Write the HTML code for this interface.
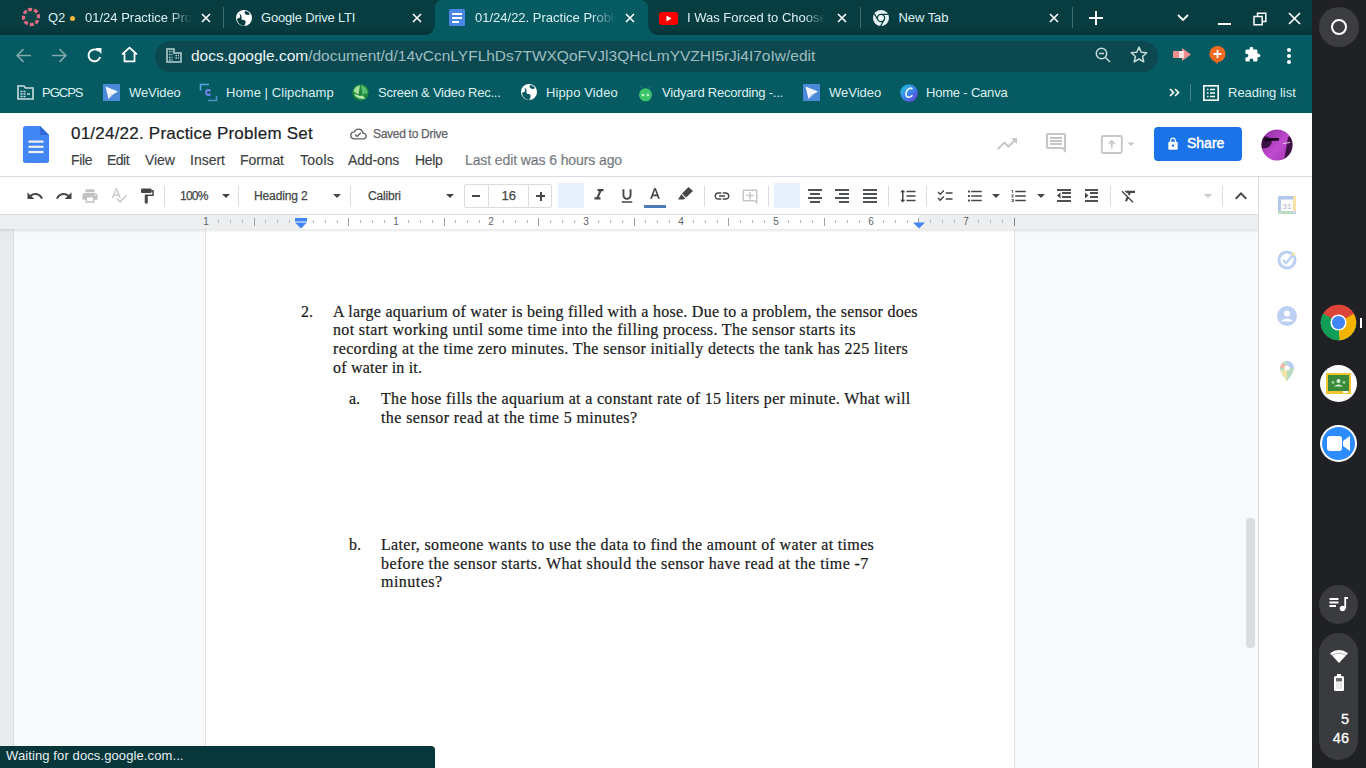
<!DOCTYPE html>
<html><head><meta charset="utf-8">
<style>
*{margin:0;padding:0;box-sizing:border-box}
html,body{width:1366px;height:768px;overflow:hidden;background:#fff;font-family:"Liberation Sans",sans-serif}
.a{position:absolute}
.nw{white-space:nowrap}
#tabs{left:0;top:0;width:1312px;height:35px;background:linear-gradient(#073c40 0,#073c40 29px,#043337 35px)}
#toolbar{left:0;top:35px;width:1312px;height:78px;background:#055b61}
#shelf{left:1312px;top:0;width:54px;height:768px;background:#202124}
#dochead{left:0;top:113px;width:1312px;height:63px;background:#fff}
#docbar{left:0;top:176px;width:1312px;height:39px;background:#fff;border-top:1px solid #dadce0}
#ruler{left:0;top:215px;width:1258px;height:14px;background:#eceef0}
#docarea{left:0;top:229px;width:1258px;height:539px;background:#f8f9fa}
#sidepanel{left:1258px;top:177px;width:54px;height:591px;background:#fff;border-left:1px solid #dadce0}
.tt{color:#dcf0f2;font-size:13px}
.bm{color:#dcf0f2;font-size:13px}
.menu{color:#3c4043;font-size:14px;-webkit-text-stroke:0.15px #3c4043}
.doc{font-family:"Liberation Serif",serif;color:#1a1a1a;font-size:16px;-webkit-text-stroke:0.2px #1a1a1a}
</style></head><body>
<div id="tabs" class="a"></div>
<div id="toolbar" class="a"></div>
<!-- tab strip -->
<svg class="a" style="left:423px;top:0" width="238" height="35" viewBox="0 0 238 35"><path d="M0 35 Q12 35 12 23 L12 8 Q12 0 20 0 L217 0 Q225 0 225 8 L225 23 Q225 35 237 35 Z" fill="#055b61"/></svg>
<svg class="a" style="left:21px;top:7px" width="20" height="20" viewBox="0 0 20 20"><circle cx="10" cy="10" r="6" fill="#0b4a40"/><circle cx="10" cy="10" r="2.5" fill="#0f3f5a"/><circle cx="10" cy="10" r="7.6" fill="none" stroke="#e56a86" stroke-width="3.2" stroke-dasharray="4 1.97" transform="rotate(-112 10 10)"/></svg>
<div class="a nw tt" style="left:48px;top:10px">Q2</div>
<div class="a" style="left:70px;top:15.5px;width:5px;height:5px;border-radius:2.5px;background:#f6b73c"></div>
<div class="a nw tt" style="left:85px;top:10px;width:107px;overflow:hidden;-webkit-mask-image:linear-gradient(90deg,#000 80%,transparent)">01/24 Practice Problem</div>
<svg class="a" style="left:201px;top:13px" width="10" height="10" viewBox="0 0 10 10"><path d="M1 1L9 9M9 1L1 9" stroke="#fff" stroke-width="1.6"/></svg>
<div class="a" style="left:223px;top:7px;width:1px;height:21px;background:#3f6a6e"></div>
<svg class="a" style="left:236px;top:10px" width="16" height="16" viewBox="0 0 16 16"><circle cx="8" cy="8" r="8" fill="#fff"/><path d="M3 3.5 Q6 5 5.5 7.5 Q5 10 7.5 10 Q10 10 9.5 13 Q9 15 8 16 Q5 15.5 3 13.5 Q1.5 12 1 9 Q2 8 3.5 8 Q5 6 3 3.5Z M9 1 Q8 3.5 10 4.5 Q12.5 5.5 14 4 Q12 1.2 9 1Z" fill="#063a3e"/></svg>
<div class="a nw tt" style="left:261px;top:10px;letter-spacing:-0.193px">Google Drive LTI</div>
<svg class="a" style="left:412px;top:13px" width="10" height="10" viewBox="0 0 10 10"><path d="M1 1L9 9M9 1L1 9" stroke="#fff" stroke-width="1.6"/></svg>
<svg class="a" style="left:449px;top:9px" width="16" height="17" viewBox="0 0 16 17"><rect x="0" y="0" width="16" height="17" rx="1.5" fill="#4a86e8"/><rect x="3" y="4" width="10" height="2" fill="#fff"/><rect x="3" y="8" width="10" height="2" fill="#fff"/><rect x="3" y="12" width="7" height="2" fill="#fff"/></svg>
<div class="a nw tt" style="left:475px;top:10px;width:141px;overflow:hidden;-webkit-mask-image:linear-gradient(90deg,#000 82%,transparent)">01/24/22. Practice Problem Set</div>
<svg class="a" style="left:625px;top:13px" width="10" height="10" viewBox="0 0 10 10"><path d="M1 1L9 9M9 1L1 9" stroke="#fff" stroke-width="1.6"/></svg>
<svg class="a" style="left:659px;top:12px" width="19" height="13" viewBox="0 0 19 13"><rect width="19" height="13" rx="3" fill="#ff0000"/><path d="M7.5 3.5L12.5 6.5L7.5 9.5Z" fill="#fff"/></svg>
<div class="a nw tt" style="left:687px;top:10px;width:138px;overflow:hidden;-webkit-mask-image:linear-gradient(90deg,#000 85%,transparent)">I Was Forced to Choose Between</div>
<svg class="a" style="left:837px;top:13px" width="10" height="10" viewBox="0 0 10 10"><path d="M1 1L9 9M9 1L1 9" stroke="#fff" stroke-width="1.6"/></svg>
<div class="a" style="left:860px;top:7px;width:1px;height:21px;background:#3f6a6e"></div>
<svg class="a" style="left:873px;top:10px" width="16" height="16" viewBox="0 0 16 16"><circle cx="8" cy="8" r="8" fill="#e6f4f5"/><circle cx="8" cy="8" r="3.6" fill="none" stroke="#063a3e" stroke-width="1.3"/><circle cx="8" cy="8" r="2.6" fill="#e6f4f5"/><path d="M8.00 4.40L15.14 4.40M11.12 9.80L7.55 15.99M4.88 9.80L1.31 3.61" stroke="#063a3e" stroke-width="1.2"/></svg>
<div class="a nw tt" style="left:898.5px;top:10px;letter-spacing:-0.057px">New Tab</div>
<svg class="a" style="left:1049px;top:13px" width="10" height="10" viewBox="0 0 10 10"><path d="M1 1L9 9M9 1L1 9" stroke="#fff" stroke-width="1.6"/></svg>
<div class="a" style="left:1072px;top:7px;width:1px;height:21px;background:#3f6a6e"></div>
<svg class="a" style="left:1089px;top:11px" width="14" height="14" viewBox="0 0 14 14"><path d="M7 0V14M0 7H14" stroke="#fff" stroke-width="2"/></svg>
<svg class="a" style="left:1177px;top:14px" width="12" height="8" viewBox="0 0 12 8"><path d="M1 1L6 6L11 1" fill="none" stroke="#fff" stroke-width="1.8"/></svg>
<div class="a" style="left:1218px;top:23px;width:13px;height:2px;background:#fff"></div>
<svg class="a" style="left:1253px;top:12px" width="14" height="14" viewBox="0 0 14 14"><path d="M4.5 4V1.2H12.8V9.5H10 M1 4.5H9.2V12.8H1Z" fill="none" stroke="#fff" stroke-width="1.5"/></svg>
<svg class="a" style="left:1288px;top:12px" width="13" height="13" viewBox="0 0 13 13"><path d="M1 1L12 12M12 1L1 12" stroke="#fff" stroke-width="1.7"/></svg>

<div id="shelf" class="a"></div>

<!-- toolbar -->
<svg class="a" style="left:15px;top:47px" width="17" height="17" viewBox="0 0 16 16"><path d="M15 8H2M8 2L2 8L8 14" fill="none" stroke="#7fa9ad" stroke-width="1.5"/></svg>
<svg class="a" style="left:51px;top:47px" width="17" height="17" viewBox="0 0 16 16"><path d="M1 8H14M8 2L14 8L8 14" fill="none" stroke="#7fa9ad" stroke-width="1.5"/></svg>
<svg class="a" style="left:86px;top:47px" width="17" height="17" viewBox="0 0 16 16"><path d="M13.3 9.5A5.6 5.6 0 1 1 11.8 3.8" fill="none" stroke="#fff" stroke-width="1.8"/><path d="M9 1H14.5V6.5Z" fill="#fff"/></svg>
<svg class="a" style="left:121px;top:46px" width="17" height="17" viewBox="0 0 16 16"><path d="M8 1.5L1.5 7.5H3.3V14.5H12.7V7.5H14.5Z" fill="none" stroke="#fff" stroke-width="1.7" stroke-linejoin="round"/></svg>
<div class="a" style="left:155px;top:40.5px;width:1003px;height:31px;border-radius:16px;background:#0b4850"></div>
<svg class="a" style="left:166px;top:48px" width="16" height="15" viewBox="0 0 16 15"><path d="M1 14V1H8V5H15V14Z" fill="none" stroke="#b9d0d2" stroke-width="1.5"/><path d="M3 3.5h1.5M5.5 3.5h1M3 6.5h1.5M5.5 6.5h1M3 9.5h1.5M5.5 9.5h1M3 12h1.5M5.5 12h1M9.5 7.5h1.5M12 7.5h1M9.5 10h1.5M12 10h1" stroke="#b9d0d2" stroke-width="1.4"/></svg>
<div class="a nw" style="left:191px;top:46.5px;font-size:15.5px;color:#9fbec1"><span style="color:#eef7f8">docs.google.com</span>/document/d/14vCcnLYFLhDs7TWXQoFVJl3QHcLmYVZHI5rJi4I7oIw/edit</div>
<svg class="a" style="left:1095px;top:47px" width="16" height="16" viewBox="0 0 16 16"><circle cx="6.5" cy="6.5" r="5.2" fill="none" stroke="#c7dbdd" stroke-width="1.5"/><path d="M4 6.5H9M10.2 10.2L15 15" stroke="#c7dbdd" stroke-width="1.5"/></svg>
<svg class="a" style="left:1130px;top:46px" width="18" height="17" viewBox="0 0 24 23"><path d="M12 1.5L15 8.5L22.5 9.2L16.8 14.2L18.5 21.5L12 17.6L5.5 21.5L7.2 14.2L1.5 9.2L9 8.5Z" fill="none" stroke="#c7dbdd" stroke-width="2" stroke-linejoin="round"/></svg>
<svg class="a" style="left:1173px;top:48px" width="18" height="13" viewBox="0 0 18 13"><path d="M0 3H9L9 0L18 6.5L9 13V10H0Z" fill="#f08f8f"/><rect x="6" y="3" width="5" height="7" fill="#fde0e0"/></svg>
<svg class="a" style="left:1209px;top:46px" width="17" height="18" viewBox="0 0 17 18"><circle cx="8.5" cy="8" r="8" fill="#f36b21"/><path d="M5 14L8 18L10 15Z" fill="#f36b21"/><path d="M8.5 4V12M4.5 8H12.5" stroke="#fff" stroke-width="1.8"/></svg>
<svg class="a" style="left:1244px;top:46px" width="17" height="17" viewBox="0 0 24 24"><path d="M20.5 11H19V7c0-1.1-.9-2-2-2h-4V3.5C13 2.12 11.88 1 10.5 1S8 2.12 8 3.5V5H4c-1.1 0-1.99.9-1.99 2v3.8H3.5c1.49 0 2.7 1.21 2.7 2.7s-1.21 2.7-2.7 2.7H2V20c0 1.1.9 2 2 2h3.8v-1.5c0-1.49 1.21-2.7 2.7-2.7 1.49 0 2.7 1.21 2.7 2.7V22H17c1.1 0 2-.9 2-2v-4h1.5c1.38 0 2.5-1.12 2.5-2.5S21.88 11 20.5 11z" fill="#fff"/></svg>
<div class="a" style="left:1287px;top:48px;width:4px;height:4px;border-radius:2px;background:#fff"></div>
<div class="a" style="left:1287px;top:54px;width:4px;height:4px;border-radius:2px;background:#fff"></div>
<div class="a" style="left:1287px;top:60px;width:4px;height:4px;border-radius:2px;background:#fff"></div>
<!-- bookmarks -->
<svg class="a" style="left:17px;top:85px" width="17" height="15" viewBox="0 0 17 15"><path d="M1 1H7L8.5 3H16V14H1Z" fill="none" stroke="#c9dcde" stroke-width="1.6"/><path d="M3.5 6.5h2M6.5 6.5h2M3.5 9h2M6.5 9h2M3.5 11.5h2M6.5 11.5h2M10 9h3" stroke="#c9dcde" stroke-width="1.3"/></svg>
<div class="a nw bm" style="left:42px;top:85px;letter-spacing:-1.004px">PGCPS</div>
<svg class="a" style="left:103px;top:84px" width="17" height="17" viewBox="0 0 17 17"><rect width="17" height="17" fill="#4a8ad8"/><path d="M2.5 2.5L15 7.5L10 10.5L5.5 15Z" fill="#f4f8fd"/><path d="M10 10.5L5.5 15L8 9.5Z" fill="#c2d6ef"/></svg>
<div class="a nw bm" style="left:129px;top:85px;letter-spacing:-0.080px">WeVideo</div>
<svg class="a" style="left:199px;top:83px" width="19" height="19" viewBox="0 0 19 19"><path d="M1.5 7.5V1.5H10" fill="none" stroke="#5aa8e8" stroke-width="1.6"/><path d="M9 17.5H17.5V13" fill="none" stroke="#4f8fc8" stroke-width="1.6"/><path d="M11.5 8Q10.5 7 9.5 7Q7 7 7 9.5Q7 12 9.5 12Q10.5 12 11.5 11" fill="none" stroke="#7a86f0" stroke-width="1.8"/></svg>
<div class="a nw bm" style="left:226px;top:85px;letter-spacing:0.066px">Home | Clipchamp</div>
<svg class="a" style="left:352px;top:84px" width="17" height="17" viewBox="0 0 17 17"><circle cx="8.5" cy="8.5" r="8.2" fill="#1e8a3e"/><path d="M8 1.2 Q3 2 1.5 7.5 L6.5 10.5Z" fill="#a8e09a"/><path d="M9 1.2 Q14.5 2.5 15.8 9 L10.5 10.5Z" fill="#5cbf70"/><path d="M2 10 Q5 16 13.5 14.5 L10.5 11.5 Q7 12.5 6 11Z" fill="#b9e8b0"/></svg>
<div class="a nw bm" style="left:378px;top:85px;letter-spacing:-0.244px">Screen &amp; Video Rec...</div>
<svg class="a" style="left:521px;top:84px" width="16" height="16" viewBox="0 0 16 16"><circle cx="8" cy="8" r="8" fill="#fff"/><path d="M3 3.5 Q6 5 5.5 7.5 Q5 10 7.5 10 Q10 10 9.5 13 Q9 15 8 16 Q5 15.5 3 13.5 Q1.5 12 1 9 Q2 8 3.5 8 Q5 6 3 3.5Z M9 1 Q8 3.5 10 4.5 Q12.5 5.5 14 4 Q12 1.2 9 1Z" fill="#055b61"/></svg>
<div class="a nw bm" style="left:546px;top:85px;letter-spacing:0.121px">Hippo Video</div>
<svg class="a" style="left:637px;top:84px" width="17" height="18" viewBox="0 0 17 18"><circle cx="8.5" cy="10.8" r="6.5" fill="#3cc46a"/><path d="M5 4.5L4 2M12 4.5L13 2" stroke="#3a7a8a" stroke-width="1"/><circle cx="6" cy="11" r="1.3" fill="#c8f5d0"/><circle cx="11" cy="11" r="1.3" fill="#c8f5d0"/></svg>
<div class="a nw bm" style="left:662px;top:85px;letter-spacing:-0.205px">Vidyard Recording -...</div>
<svg class="a" style="left:803px;top:84px" width="17" height="17" viewBox="0 0 17 17"><rect width="17" height="17" fill="#4a8ad8"/><path d="M2.5 2.5L15 7.5L10 10.5L5.5 15Z" fill="#f4f8fd"/><path d="M10 10.5L5.5 15L8 9.5Z" fill="#c2d6ef"/></svg>
<div class="a nw bm" style="left:829px;top:85px">WeVideo</div>
<svg class="a" style="left:900px;top:84px" width="18" height="18" viewBox="0 0 18 18"><defs><linearGradient id="cg" x1="0" y1="0" x2="1" y2="1"><stop offset="0" stop-color="#1ec8d8"/><stop offset="0.55" stop-color="#3a7ee8"/><stop offset="1" stop-color="#7a3ae0"/></linearGradient></defs><circle cx="9" cy="9" r="8.7" fill="url(#cg)"/><path d="M12.3 5.3Q11.5 3.8 10 4.3Q6 5.8 6 10.5Q6.2 13.5 9 13.2Q11 13 12.5 11.2" fill="none" stroke="#f2f8ff" stroke-width="1.6"/></svg>
<div class="a nw bm" style="left:926px;top:85px;letter-spacing:-0.192px">Home - Canva</div>
<svg class="a" style="left:1169px;top:88px" width="11" height="9" viewBox="0 0 11 9"><path d="M1 1L4.5 4.5L1 8M6 1L9.5 4.5L6 8" fill="none" stroke="#fff" stroke-width="1.7"/></svg>
<div class="a" style="left:1190px;top:84px;width:1px;height:17px;background:#4b8084"></div>
<svg class="a" style="left:1203px;top:85px" width="16" height="16" viewBox="0 0 16 16"><rect x="0.8" y="0.8" width="14.4" height="14.4" fill="none" stroke="#fff" stroke-width="1.6"/><path d="M4 4.5h1.5M7 4.5h5M4 8h1.5M7 8h5M4 11.5h1.5M7 11.5h5" stroke="#fff" stroke-width="1.6"/></svg>
<div class="a nw bm" style="left:1228px;top:85px;letter-spacing:-0.013px">Reading list</div>
<!-- shelf -->
<div class="a" style="left:1319px;top:7px;width:40px;height:40px;border-radius:20px;background:#3c3d40"></div>
<div class="a" style="left:1331px;top:19px;width:16px;height:16px;border-radius:8px;border:2px solid #fff"></div>
<div id="dochead" class="a"></div>
<div id="docbar" class="a"></div>

<!-- docs header -->
<svg class="a" style="left:23px;top:126px" width="26" height="37" viewBox="0 0 26 37"><path d="M2.5 0H17L26 9V34.5A2.5 2.5 0 0 1 23.5 37H2.5A2.5 2.5 0 0 1 0 34.5V2.5A2.5 2.5 0 0 1 2.5 0Z" fill="#4285f4"/><path d="M17 0L26 9H17Z" fill="#3367d6"/><rect x="5.5" y="14.5" width="15" height="2.2" fill="#f1f1f1"/><rect x="5.5" y="19.7" width="15" height="2.2" fill="#f1f1f1"/><rect x="5.5" y="24.9" width="15" height="2.2" fill="#f1f1f1"/></svg>
<div class="a nw" style="left:71px;top:124px;font-size:17px;color:#202124;letter-spacing:0.22px;-webkit-text-stroke:0.2px #202124">01/24/22. Practice Problem Set</div>
<svg class="a" style="left:350px;top:127px" width="17" height="14" viewBox="0 0 24 20"><path d="M19.35 8.04A7.49 7.49 0 0 0 12 2C9.11 2 6.6 3.64 5.35 6.04A5.994 5.994 0 0 0 0 12c0 3.31 2.69 6 6 6h13c2.76 0 5-2.24 5-5 0-2.64-2.05-4.78-4.65-4.96zM19 16H6c-2.21 0-4-1.79-4-4 0-2.05 1.53-3.76 3.56-3.97l1.07-.11.5-.95A5.469 5.469 0 0 1 12 4c2.62 0 4.88 1.86 5.39 4.43l.3 1.5 1.53.11A2.98 2.98 0 0 1 22 13c0 1.65-1.35 3-3 3zm-9-3.82l-2.09-2.09L6.5 11.5 10 15l6.01-6.01-1.41-1.41z" fill="#5f6368"/></svg>
<div class="a nw" style="left:373px;top:127px;font-size:12px;color:#5f6368;letter-spacing:-0.293px;-webkit-text-stroke:0.25px #5f6368">Saved to Drive</div>
<div class="a nw menu" style="left:71px;top:152px;letter-spacing:-0.354px">File</div>
<div class="a nw menu" style="left:107px;top:152px;letter-spacing:-0.508px">Edit</div>
<div class="a nw menu" style="left:145px;top:152px;letter-spacing:-0.098px">View</div>
<div class="a nw menu" style="left:190px;top:152px;letter-spacing:-0.003px">Insert</div>
<div class="a nw menu" style="left:240px;top:152px;letter-spacing:-0.069px">Format</div>
<div class="a nw menu" style="left:300px;top:152px;letter-spacing:0.278px">Tools</div>
<div class="a nw menu" style="left:348px;top:152px;letter-spacing:-0.143px">Add-ons</div>
<div class="a nw menu" style="left:415px;top:152px;letter-spacing:-0.299px">Help</div>
<div class="a nw menu" style="left:465px;top:152px;color:#80868b;letter-spacing:-0.102px">Last edit was 6 hours ago</div>
<svg class="a" style="left:995px;top:132px" width="24" height="24" viewBox="0 0 24 24"><path d="M16 6l2.29 2.29-4.88 4.88-4-4L2 16.59 3.41 18l6-6 4 4 6.3-6.29L22 12V6z" fill="#c4c7c5"/></svg>
<svg class="a" style="left:1044px;top:131px" width="24" height="24" viewBox="0 0 24 24"><path d="M21.99 4c0-1.1-.89-2-1.99-2H4c-1.1 0-2 .9-2 2v12c0 1.1.9 2 2 2h14l4 4-.01-18zM20 4v13.17L18.83 16H4V4h16zM6 12h12v2H6zm0-3h12v2H6zm0-3h12v2H6z" fill="#c4c7c5"/></svg>

<svg class="a" style="left:1100px;top:134px" width="40" height="20" viewBox="0 0 40 20"><rect x="1.8" y="2" width="20" height="17" rx="1.5" fill="none" stroke="#c4c7c5" stroke-width="1.8"/><path d="M11.8 14.5V7M8.8 10L11.8 7L14.8 10" fill="none" stroke="#c4c7c5" stroke-width="1.6"/><path d="M27.5 8.5H34.5L31 12Z" fill="#c4c7c5"/></svg>
<div class="a" style="left:1154px;top:127px;width:88px;height:34px;border-radius:4px;background:#1a73e8"></div>
<svg class="a" style="left:1166px;top:137px" width="14" height="14" viewBox="0 0 24 24"><path d="M18 8h-1V6c0-2.76-2.24-5-5-5S7 3.24 7 6v2H6c-1.1 0-2 .9-2 2v10c0 1.1.9 2 2 2h12c1.1 0 2-.9 2-2V10c0-1.1-.9-2-2-2zm-6 9c-1.1 0-2-.9-2-2s.9-2 2-2 2 .9 2 2-.9 2-2 2zm3.1-9H8.9V6c0-1.71 1.39-3.1 3.1-3.1 1.71 0 3.1 1.39 3.1 3.1v2z" fill="#fff"/></svg>

<div class="a nw" style="left:1187px;top:135px;font-size:14px;color:#fff;-webkit-text-stroke:0.45px #fff;letter-spacing:0px">Share</div>
<svg class="a" style="left:1261px;top:129px" width="32" height="32" viewBox="0 0 32 32"><defs><clipPath id="avc"><circle cx="16" cy="16" r="15.5"/></clipPath><linearGradient id="avg" x1="0" y1="0" x2="1" y2="1"><stop offset="0" stop-color="#8a2a9a"/><stop offset="0.55" stop-color="#c04ad0"/><stop offset="1" stop-color="#a035b0"/></linearGradient></defs><g clip-path="url(#avc)"><rect width="32" height="32" fill="url(#avg)"/><path d="M0 8 Q6 6 10 10 Q12 14 8 18 Q4 20 0 19Z" fill="#2a0a30" opacity="0.85"/><path d="M3 10 Q10 8.5 18 9 L18 11.5 Q10 11.5 4 13Z" fill="#1a0620"/><path d="M23 32 L27 8 L32 6 L32 32Z" fill="#2a0a2e" opacity="0.85"/><path d="M22 14.5 L29 13.5" stroke="#e8c8ec" stroke-width="1"/></g></svg>
<!-- toolbar -->
<svg class="a" style="left:26px;top:187px" width="18" height="18" viewBox="0 0 24 24"><path d="M12.5 8c-2.65 0-5.05.99-6.9 2.6L2 7v9h9l-3.62-3.62c1.39-1.16 3.16-1.88 5.12-1.88 3.54 0 6.55 2.31 7.6 5.5l2.37-.78C21.08 11.03 17.15 8 12.5 8z" fill="#444746"/></svg>
<svg class="a" style="left:55px;top:187px" width="18" height="18" viewBox="0 0 24 24"><path d="M18.4 10.6C16.550 8.99 14.15 8 11.5 8c-4.65 0-8.58 3.03-9.96 7.22L3.9 16c1.05-3.19 4.05-5.5 7.6-5.5 1.95 0 3.73.72 5.12 1.88L13 16h9V7l-3.6 3.6z" fill="#444746"/></svg>
<svg class="a" style="left:81px;top:187px" width="18" height="18" viewBox="0 0 24 24"><path d="M19 8H5c-1.66 0-3 1.34-3 3v6h4v4h12v-4h4v-6c0-1.66-1.34-3-3-3zm-3 11H8v-5h8v5zm3-7c-.55 0-1-.45-1-1s.45-1 1-1 1 .45 1 1-.45 1-1 1zm-1-9H6v4h12V3z" fill="#c0c2c4"/></svg>
<svg class="a" style="left:110px;top:186px" width="18" height="18" viewBox="0 0 24 24"><path d="M12.45 16h2.09L9.43 3H7.57L2.46 16h2.09l1.12-3h5.64l1.14 3zm-6.02-5L8.5 5.48 10.57 11H6.43zm15.16.59l-8.09 8.09L9.830 16l-1.41 1.41 5.09 5.09L23 13l-1.41-1.41z" fill="#c8cacc"/></svg>
<svg class="a" style="left:138px;top:187px" width="18" height="18" viewBox="0 0 24 24"><path d="M18 4V3c0-.55-.45-1-1-1H5c-.55 0-1 .45-1 1v4c0 .55.45 1 1 1h12c.55 0 1-.45 1-1V6h1v4H9v11c0 .55.45 1 1 1h2c.55 0 1-.45 1-1v-9h8V4h-3z" fill="#444746"/></svg>
<div class="a" style="left:164px;top:186px;width:1px;height:21px;background:#dadce0"></div>

<div class="a nw" style="left:180px;top:189px;font-size:12px;color:#444746;letter-spacing:-0.768px;-webkit-text-stroke:0.25px #444746">100%</div>
<svg class="a" style="left:222px;top:194px" width="8" height="4" viewBox="0 0 8 4"><path d="M0 0H8L4 4Z" fill="#444746"/></svg>
<div class="a" style="left:238px;top:186px;width:1px;height:21px;background:#dadce0"></div>

<div class="a nw" style="left:254px;top:189px;font-size:12px;color:#444746;letter-spacing:-0.115px;-webkit-text-stroke:0.25px #444746">Heading 2</div>
<svg class="a" style="left:333px;top:194px" width="8" height="4" viewBox="0 0 8 4"><path d="M0 0H8L4 4Z" fill="#444746"/></svg>
<div class="a" style="left:350px;top:186px;width:1px;height:21px;background:#dadce0"></div>

<div class="a nw" style="left:368px;top:189px;font-size:12px;color:#444746;letter-spacing:-0.186px;-webkit-text-stroke:0.25px #444746">Calibri</div>
<svg class="a" style="left:446px;top:194px" width="8" height="4" viewBox="0 0 8 4"><path d="M0 0H8L4 4Z" fill="#444746"/></svg>

<div class="a" style="left:464px;top:184px;width:88px;height:24px;border:1px solid #dadce0;border-radius:2px"></div>
<div class="a" style="left:488px;top:185px;width:1px;height:22px;background:#dadce0"></div>
<div class="a" style="left:528px;top:185px;width:1px;height:22px;background:#dadce0"></div>
<div class="a" style="left:472px;top:195px;width:8px;height:2px;background:#444746"></div>
<div class="a nw" style="left:501.5px;top:188px;font-size:13px;color:#444746;-webkit-text-stroke:0.25px #444746">16</div>
<div class="a" style="left:536px;top:195px;width:9px;height:2px;background:#444746"></div>
<div class="a" style="left:539.5px;top:191.5px;width:2px;height:9px;background:#444746"></div>
<div class="a" style="left:558px;top:183px;width:26px;height:25px;background:#e8f0fe"></div>
<svg class="a" style="left:590px;top:186px" width="18" height="18" viewBox="0 0 24 24"><path d="M10 4v3h2.21l-3.42 8H6v3h8v-3h-2.21l3.42-8H18V4z" fill="#444746"/></svg>
<svg class="a" style="left:618px;top:187px" width="18" height="18" viewBox="0 0 24 24"><path d="M12 17c3.31 0 6-2.690 6-6V3h-2.5v8c0 1.93-1.57 3.5-3.5 3.5S8.5 12.93 8.5 11V3H6v8c0 3.31 2.69 6 6 6zm-7 2v2h14v-2H5z" fill="#444746"/></svg>
<svg class="a" style="left:646px;top:186px" width="18" height="18" viewBox="0 0 24 24"><path d="M5.49 17h2.42l1.27-3.5h5.65L16.09 17h2.42L13.25 3h-2.5L5.49 17zm4.42-5.61l2.03-5.79h.12l2.03 5.79H9.91z" fill="#444746"/></svg>

<div class="a" style="left:644px;top:205px;width:22px;height:3px;background:#4a7ab8"></div>
<svg class="a" style="left:678px;top:187px" width="15" height="13" viewBox="0 0 15 13"><path d="M10.5 0 L15 4 L8 10.5 L4 6.5 Z M3.3 7.3 L7.2 11.2 L5.5 12.6 L0 12.6 Z" fill="#444746"/></svg>
<div class="a" style="left:704px;top:186px;width:1px;height:21px;background:#dadce0"></div>
<svg class="a" style="left:713px;top:187px" width="18" height="18" viewBox="0 0 24 24"><path d="M3.9 12c0-1.71 1.39-3.1 3.1-3.1h4V7H7c-2.76 0-5 2.24-5 5s2.24 5 5 5h4v-1.9H7c-1.71 0-3.1-1.39-3.1-3.1zM8 13h8v-2H8v2zm9-6h-4v1.9h4c1.71 0 3.1 1.39 3.1 3.1s-1.39 3.1-3.1 3.1h-4V17h4c2.76 0 5-2.24 5-5s-2.24-5-5-5z" fill="#444746"/></svg>
<svg class="a" style="left:741px;top:188px" width="18" height="18" viewBox="0 0 24 24"><path d="M22 4c0-1.1-.9-2-2-2H4c-1.1 0-1.99.9-1.99 2L2 16c0 1.1.9 2 2 2h14l4 4V4zm-2 13.17L18.83 16H4V4h16v13.17zM13 5h-2v4H7v2h4v4h2v-4h4V9h-4z" fill="#c4c7c5"/></svg>
<div class="a" style="left:768px;top:186px;width:1px;height:21px;background:#dadce0"></div>

<div class="a" style="left:774px;top:183px;width:26px;height:25px;background:#e8f0fe"></div>
<div class="a" style="left:808.1px;top:189px;width:13.7px;height:2px;background:#4f5254"></div><div class="a" style="left:810px;top:193px;width:9.8px;height:2px;background:#4f5254"></div><div class="a" style="left:808.1px;top:197px;width:13.7px;height:2px;background:#4f5254"></div><div class="a" style="left:810px;top:201px;width:9.8px;height:2px;background:#4f5254"></div>
<div class="a" style="left:835.1px;top:189px;width:13.6px;height:2px;background:#4f5254"></div><div class="a" style="left:839.2px;top:193px;width:9.5px;height:2px;background:#4f5254"></div><div class="a" style="left:835.1px;top:197px;width:13.6px;height:2px;background:#4f5254"></div><div class="a" style="left:839.2px;top:201px;width:9.5px;height:2px;background:#4f5254"></div>
<div class="a" style="left:863.1px;top:189px;width:13.6px;height:2px;background:#4f5254"></div><div class="a" style="left:863.1px;top:193px;width:13.6px;height:2px;background:#4f5254"></div><div class="a" style="left:863.1px;top:197px;width:13.6px;height:2px;background:#4f5254"></div><div class="a" style="left:863.1px;top:201px;width:13.6px;height:2px;background:#4f5254"></div>
<div class="a" style="left:888px;top:186px;width:1px;height:21px;background:#dadce0"></div>
<svg class="a" style="left:899px;top:187px" width="18" height="18" viewBox="0 0 24 24"><path d="M6 7h2.5L5 3.5 1.5 7H4v10H1.5L5 20.5 8.5 17H6V7zm4-2v2h12V5H10zm0 14h12v-2H10v2zm0-6h12v-2H10v2z" fill="#444746"/></svg>
<div class="a" style="left:926px;top:186px;width:1px;height:21px;background:#dadce0"></div>
<svg class="a" style="left:936px;top:187px" width="18" height="18" viewBox="0 0 24 24"><path d="M22 7h-9v2h9V7zm0 8h-9v2h9v-2zM5.54 11L2 7.46l1.41-1.41 2.12 2.12 4.24-4.24 1.41 1.41L5.54 11zm0 8L2 15.46l1.41-1.41 2.12 2.12 4.24-4.24 1.41 1.41L5.54 19z" fill="#444746"/></svg>
<svg class="a" style="left:966px;top:187px" width="18" height="18" viewBox="0 0 24 24"><path d="M4 10.5c-.83 0-1.5.67-1.5 1.5s.67 1.5 1.5 1.5 1.5-.67 1.5-1.5-.67-1.5-1.5-1.5zm0-6c-.83 0-1.5.67-1.5 1.5S3.17 7.5 4 7.5 5.5 6.83 5.5 6 4.83 4.5 4 4.5zm0 12c-.83 0-1.5.68-1.5 1.5s.68 1.5 1.5 1.5 1.5-.68 1.5-1.5-.67-1.5-1.5-1.5zM7 19h14v-2H7v2zm0-6h14v-2H7v2zm0-8v2h14V5H7z" fill="#444746"/></svg>
<svg class="a" style="left:992px;top:194px" width="8" height="4" viewBox="0 0 8 4"><path d="M0 0H8L4 4Z" fill="#444746"/></svg>
<svg class="a" style="left:1010px;top:187px" width="18" height="18" viewBox="0 0 24 24"><path d="M2 17h2v.5H3v1h1v.5H2v1h3v-4H2v1zm1-9h1V4H2v1h1v3zm-1 3h1.8L2 13.1v.9h3v-1H3.2L5 10.9V10H2v1zm5-6v2h14V5H7zm0 14h14v-2H7v2zm0-6h14v-2H7v2z" fill="#444746"/></svg>
<svg class="a" style="left:1037px;top:194px" width="8" height="4" viewBox="0 0 8 4"><path d="M0 0H8L4 4Z" fill="#444746"/></svg>
<div class="a" style="left:1057px;top:189px;width:13.6px;height:2px;background:#4f5254"></div><div class="a" style="left:1062px;top:192px;width:8.6px;height:2px;background:#4f5254"></div><div class="a" style="left:1062px;top:196px;width:8.6px;height:2px;background:#4f5254"></div><div class="a" style="left:1057px;top:200px;width:13.6px;height:2px;background:#4f5254"></div><svg class="a" style="left:1057px;top:192px" width="4" height="7" viewBox="0 0 4 7"><path d="M3.5 0.5V6.5L0 3.5Z" fill="#444746"/></svg>
<div class="a" style="left:1084.6px;top:189px;width:13.8px;height:2px;background:#4f5254"></div><div class="a" style="left:1089.6px;top:192px;width:8.8px;height:2px;background:#4f5254"></div><div class="a" style="left:1089.6px;top:196px;width:8.8px;height:2px;background:#4f5254"></div><div class="a" style="left:1084.6px;top:200px;width:13.8px;height:2px;background:#4f5254"></div><svg class="a" style="left:1084.6px;top:192px" width="4" height="7" viewBox="0 0 4 7"><path d="M0 0.5V6.5L3.5 3.5Z" fill="#444746"/></svg>
<div class="a" style="left:1110px;top:186px;width:1px;height:21px;background:#dadce0"></div>
<svg class="a" style="left:1120px;top:187px" width="18" height="18" viewBox="0 0 24 24"><path d="M3.27 5L2 6.27l6.97 6.97L6.5 19h3l1.57-3.66L16.73 21 18 19.730 3.55 5.27 3.27 5zM6 5v.18L8.82 8h2.4l-.72 1.68 2.1 2.1L14.21 8H20V5H6z" fill="#444746"/></svg>
<svg class="a" style="left:1204px;top:194px" width="8" height="4" viewBox="0 0 8 4"><path d="M0 0H8L4 4Z" fill="#c8cacc"/></svg>
<div class="a" style="left:1222px;top:186px;width:1px;height:21px;background:#dadce0"></div>
<svg class="a" style="left:1229px;top:184px" width="24" height="24" viewBox="0 0 24 24"><path d="M12 8l-6 6 1.41 1.41L12 10.83l4.59 4.58L18 14z" fill="#444746"/></svg>

<div id="ruler" class="a"></div>
<div id="docarea" class="a"></div>
<div id="sidepanel" class="a"></div>
<!-- side panel icons -->
<svg class="a" style="left:1278px;top:196px" width="18" height="18" viewBox="0 0 18 18"><rect x="0" y="0" width="18" height="18" rx="1" fill="#b3c7ea"/><rect x="0" y="15" width="15" height="3" fill="#bcdcc4"/><rect x="15" y="0" width="3" height="15" fill="#f7e2a8"/><path d="M15 15H18L15 18Z" fill="#dfe3ea"/><rect x="3" y="3.5" width="12" height="11.5" fill="#fdfdfe"/><text x="9" y="12.5" font-size="8" text-anchor="middle" font-family="Liberation Sans" fill="#b0b8c8">31</text></svg>
<svg class="a" style="left:1277px;top:250px" width="20" height="20" viewBox="0 0 20 20"><circle cx="10" cy="10" r="8" fill="none" stroke="#bcd0f3" stroke-width="3"/><path d="M6 10L9 13L17 4" fill="none" stroke="#bcd0f3" stroke-width="2.4"/><circle cx="16.5" cy="4" r="1.8" fill="#f7e3a3"/></svg>
<svg class="a" style="left:1277px;top:306px" width="20" height="20" viewBox="0 0 20 20"><circle cx="10" cy="10" r="10" fill="#bcd0f3"/><circle cx="10" cy="7.5" r="3" fill="#fff"/><path d="M4.5 14.5Q10 10.5 15.5 14.5V15.5H4.5Z" fill="#fff"/></svg>
<svg class="a" style="left:1280px;top:361px" width="14" height="20" viewBox="0 0 14 20"><path d="M7 0A7 7 0 0 0 0 7C0 12 7 20 7 20S14 12 14 7A7 7 0 0 0 7 0Z" fill="#b7dcc0"/><path d="M7 0A7 7 0 0 1 14 7L7 7Z" fill="#bcd0f3"/><path d="M0 7A7 7 0 0 1 3 1.5L7 7Z" fill="#f4b8b0"/><path d="M7 20C5 17 2 13 1 10L7 7Z" fill="#f7e3a3"/><circle cx="7" cy="7" r="2.5" fill="#fff"/></svg>
<!-- shelf apps -->
<svg class="a" style="left:1320px;top:304px" width="37" height="37" viewBox="0 0 48 48"><circle cx="24" cy="24" r="23" fill="#db4437"/><path d="M24 24L4.1 12.5A23 23 0 0 0 14.5 44.9Z" fill="#0f9d58"/><path d="M24 24L14.5 44.9A23 23 0 0 0 46.8 20.5Z" fill="#0f9d58"/><path d="M24 24L43.9 12.5A23 23 0 0 1 25 47L24 24Z" fill="#f4b400"/><path d="M24 24L25 47A23 23 0 0 1 4.1 12.5Z" fill="#0f9d58"/><path d="M24 1A23 23 0 0 1 43.9 12.5H24Z" fill="#db4437"/><circle cx="24" cy="24" r="10.5" fill="#fff"/><circle cx="24" cy="24" r="8.5" fill="#4285f4"/></svg>
<div class="a" style="left:1360px;top:318px;width:2px;height:10px;background:#fff"></div>
<div class="a" style="left:1320px;top:365px;width:37px;height:37px;border-radius:50%;background:#fff"></div>
<svg class="a" style="left:1326px;top:373px" width="25" height="21" viewBox="0 0 25 21"><rect x="0" y="0" width="25" height="21" fill="#f4c430"/><rect x="2" y="2" width="21" height="16" fill="#3a8a3a"/><circle cx="12.5" cy="8" r="2" fill="#d6efd6"/><path d="M8 13.5Q12.5 9.5 17 13.5Z" fill="#d6efd6"/><circle cx="7" cy="9.5" r="1.4" fill="#9fd19f"/><circle cx="18" cy="9.5" r="1.4" fill="#9fd19f"/><rect x="17" y="18" width="5" height="2" fill="#fff"/></svg>
<div class="a" style="left:1320px;top:425px;width:37px;height:37px;border-radius:50%;background:#fff"></div>
<div class="a" style="left:1322px;top:427px;width:33px;height:33px;border-radius:50%;background:#2d8cff"></div>
<svg class="a" style="left:1327px;top:436px" width="23" height="15" viewBox="0 0 23 15"><rect x="0" y="0" width="15" height="15" rx="3" fill="#fff"/><path d="M16 5L23 0V15L16 10Z" fill="#fff"/></svg>
<!-- shelf status -->
<div class="a" style="left:1319px;top:585px;width:39px;height:39px;border-radius:50%;background:#3a3b3e"></div>
<svg class="a" style="left:1329px;top:597px" width="20" height="15" viewBox="0 0 20 15"><path d="M0.5 2H9.5M0.5 5.5H9.5M0.5 9H7" stroke="#fff" stroke-width="1.8"/><path d="M16.2 11.5V1H19" fill="none" stroke="#fff" stroke-width="1.8"/><circle cx="13.5" cy="11.5" r="2.8" fill="#fff"/></svg>
<div class="a" style="left:1319px;top:633px;width:39px;height:127px;border-radius:19.5px;background:#3a3b3e"></div>
<svg class="a" style="left:1330px;top:650px" width="18" height="13" viewBox="0 0 18 13"><path d="M0 3.2Q9 -3 18 3.2L9 13Z" fill="#fff"/><path d="M2.3 5.3Q9 0.8 15.7 5.3" fill="none" stroke="#3a3b3e" stroke-width="0.8" opacity="0.5"/></svg>
<svg class="a" style="left:1334px;top:674px" width="10" height="17" viewBox="0 0 10 17"><rect x="3" y="0" width="4" height="2" fill="#fff"/><rect x="0" y="2" width="10" height="15" rx="1.5" fill="#fff"/><rect x="2" y="4" width="6" height="3.5" fill="#6b6c6f"/><rect x="2" y="8.5" width="6" height="6.5" fill="#e8e8e8"/></svg>
<div class="a nw" style="left:1320px;top:711px;width:29px;text-align:right;font-size:14.5px;color:#fff;-webkit-text-stroke:0.3px #fff">5</div>
<div class="a nw" style="left:1320px;top:730px;width:29px;text-align:right;font-size:14.5px;color:#fff;-webkit-text-stroke:0.3px #fff">46</div>
<!-- ruler -->
<div class="a" style="left:0;top:214px;width:1258px;height:1px;background:#dadce0"></div>
<div class="a" style="left:301px;top:215px;width:618px;height:14px;background:#fff"></div>
<div class="a nw" style="left:196.0px;top:215px;width:20px;text-align:center;font-size:10px;line-height:14px;color:#5f6368">1</div>
<div class="a nw" style="left:386.0px;top:215px;width:20px;text-align:center;font-size:10px;line-height:14px;color:#5f6368">1</div>
<div class="a nw" style="left:481.0px;top:215px;width:20px;text-align:center;font-size:10px;line-height:14px;color:#5f6368">2</div>
<div class="a nw" style="left:576.0px;top:215px;width:20px;text-align:center;font-size:10px;line-height:14px;color:#5f6368">3</div>
<div class="a nw" style="left:671.0px;top:215px;width:20px;text-align:center;font-size:10px;line-height:14px;color:#5f6368">4</div>
<div class="a nw" style="left:766.0px;top:215px;width:20px;text-align:center;font-size:10px;line-height:14px;color:#5f6368">5</div>
<div class="a nw" style="left:861.0px;top:215px;width:20px;text-align:center;font-size:10px;line-height:14px;color:#5f6368">6</div>
<div class="a nw" style="left:956.0px;top:215px;width:20px;text-align:center;font-size:10px;line-height:14px;color:#5f6368">7</div>
<div class="a" style="left:218px;top:220px;width:1px;height:3px;background:#b5b9be"></div>
<div class="a" style="left:230px;top:220px;width:1px;height:3px;background:#b5b9be"></div>
<div class="a" style="left:242px;top:220px;width:1px;height:3px;background:#b5b9be"></div>
<div class="a" style="left:254px;top:218px;width:1px;height:8px;background:#9aa0a6"></div>
<div class="a" style="left:265px;top:220px;width:1px;height:3px;background:#b5b9be"></div>
<div class="a" style="left:277px;top:220px;width:1px;height:3px;background:#b5b9be"></div>
<div class="a" style="left:289px;top:220px;width:1px;height:3px;background:#b5b9be"></div>
<div class="a" style="left:313px;top:220px;width:1px;height:3px;background:#b5b9be"></div>
<div class="a" style="left:325px;top:220px;width:1px;height:3px;background:#b5b9be"></div>
<div class="a" style="left:337px;top:220px;width:1px;height:3px;background:#b5b9be"></div>
<div class="a" style="left:348px;top:218px;width:1px;height:8px;background:#9aa0a6"></div>
<div class="a" style="left:360px;top:220px;width:1px;height:3px;background:#b5b9be"></div>
<div class="a" style="left:372px;top:220px;width:1px;height:3px;background:#b5b9be"></div>
<div class="a" style="left:384px;top:220px;width:1px;height:3px;background:#b5b9be"></div>
<div class="a" style="left:408px;top:220px;width:1px;height:3px;background:#b5b9be"></div>
<div class="a" style="left:420px;top:220px;width:1px;height:3px;background:#b5b9be"></div>
<div class="a" style="left:432px;top:220px;width:1px;height:3px;background:#b5b9be"></div>
<div class="a" style="left:444px;top:218px;width:1px;height:8px;background:#9aa0a6"></div>
<div class="a" style="left:455px;top:220px;width:1px;height:3px;background:#b5b9be"></div>
<div class="a" style="left:467px;top:220px;width:1px;height:3px;background:#b5b9be"></div>
<div class="a" style="left:479px;top:220px;width:1px;height:3px;background:#b5b9be"></div>
<div class="a" style="left:503px;top:220px;width:1px;height:3px;background:#b5b9be"></div>
<div class="a" style="left:515px;top:220px;width:1px;height:3px;background:#b5b9be"></div>
<div class="a" style="left:527px;top:220px;width:1px;height:3px;background:#b5b9be"></div>
<div class="a" style="left:538px;top:218px;width:1px;height:8px;background:#9aa0a6"></div>
<div class="a" style="left:550px;top:220px;width:1px;height:3px;background:#b5b9be"></div>
<div class="a" style="left:562px;top:220px;width:1px;height:3px;background:#b5b9be"></div>
<div class="a" style="left:574px;top:220px;width:1px;height:3px;background:#b5b9be"></div>
<div class="a" style="left:598px;top:220px;width:1px;height:3px;background:#b5b9be"></div>
<div class="a" style="left:610px;top:220px;width:1px;height:3px;background:#b5b9be"></div>
<div class="a" style="left:622px;top:220px;width:1px;height:3px;background:#b5b9be"></div>
<div class="a" style="left:634px;top:218px;width:1px;height:8px;background:#9aa0a6"></div>
<div class="a" style="left:645px;top:220px;width:1px;height:3px;background:#b5b9be"></div>
<div class="a" style="left:657px;top:220px;width:1px;height:3px;background:#b5b9be"></div>
<div class="a" style="left:669px;top:220px;width:1px;height:3px;background:#b5b9be"></div>
<div class="a" style="left:693px;top:220px;width:1px;height:3px;background:#b5b9be"></div>
<div class="a" style="left:705px;top:220px;width:1px;height:3px;background:#b5b9be"></div>
<div class="a" style="left:717px;top:220px;width:1px;height:3px;background:#b5b9be"></div>
<div class="a" style="left:728px;top:218px;width:1px;height:8px;background:#9aa0a6"></div>
<div class="a" style="left:740px;top:220px;width:1px;height:3px;background:#b5b9be"></div>
<div class="a" style="left:752px;top:220px;width:1px;height:3px;background:#b5b9be"></div>
<div class="a" style="left:764px;top:220px;width:1px;height:3px;background:#b5b9be"></div>
<div class="a" style="left:788px;top:220px;width:1px;height:3px;background:#b5b9be"></div>
<div class="a" style="left:800px;top:220px;width:1px;height:3px;background:#b5b9be"></div>
<div class="a" style="left:812px;top:220px;width:1px;height:3px;background:#b5b9be"></div>
<div class="a" style="left:824px;top:218px;width:1px;height:8px;background:#9aa0a6"></div>
<div class="a" style="left:835px;top:220px;width:1px;height:3px;background:#b5b9be"></div>
<div class="a" style="left:847px;top:220px;width:1px;height:3px;background:#b5b9be"></div>
<div class="a" style="left:859px;top:220px;width:1px;height:3px;background:#b5b9be"></div>
<div class="a" style="left:883px;top:220px;width:1px;height:3px;background:#b5b9be"></div>
<div class="a" style="left:895px;top:220px;width:1px;height:3px;background:#b5b9be"></div>
<div class="a" style="left:907px;top:220px;width:1px;height:3px;background:#b5b9be"></div>
<div class="a" style="left:918px;top:218px;width:1px;height:8px;background:#9aa0a6"></div>
<div class="a" style="left:930px;top:220px;width:1px;height:3px;background:#b5b9be"></div>
<div class="a" style="left:942px;top:220px;width:1px;height:3px;background:#b5b9be"></div>
<div class="a" style="left:954px;top:220px;width:1px;height:3px;background:#b5b9be"></div>
<div class="a" style="left:978px;top:220px;width:1px;height:3px;background:#b5b9be"></div>
<div class="a" style="left:990px;top:220px;width:1px;height:3px;background:#b5b9be"></div>
<div class="a" style="left:1002px;top:220px;width:1px;height:3px;background:#b5b9be"></div>
<div class="a" style="left:1014px;top:218px;width:1px;height:8px;background:#9aa0a6"></div>
<div class="a" style="left:1014px;top:218px;width:1px;height:8px;background:#80868b"></div>
<svg class="a" style="left:295px;top:218px" width="12" height="11" viewBox="0 0 12 11"><rect x="0" y="0" width="12" height="3.5" fill="#4285f4"/><path d="M0 4.5H12L6 10.5Z" fill="#4285f4"/></svg>
<svg class="a" style="left:913px;top:218px" width="12" height="11" viewBox="0 0 12 11"><path d="M0 4.5H12L6 10.5Z" fill="#4285f4"/></svg>
<!-- doc area -->
<div class="a" style="left:0;top:229px;width:13px;height:539px;background:#e8eaed"></div>
<div class="a" style="left:13px;top:229px;width:1px;height:539px;background:#dadce0"></div>
<div class="a" style="left:205px;top:229px;width:1px;height:539px;background:#e3e3e3"></div>
<div class="a" style="left:206px;top:229px;width:808px;height:539px;background:#fff"></div>
<div class="a" style="left:1014px;top:229px;width:1px;height:539px;background:#e3e3e3"></div>
<div class="a" style="left:0;top:229px;width:1258px;height:4px;background:linear-gradient(rgba(60,64,67,0.12),rgba(60,64,67,0))"></div>
<div class="a" style="left:1246px;top:518px;width:9px;height:130px;border-radius:4px;background:#dadce0"></div>
<div class="a nw doc" style="left:301px;top:303px">2.</div>
<div class="a nw doc" style="left:333px;top:303px;letter-spacing:0.261px">A large aquarium of water is being filled with a hose. Due to a problem, the sensor does</div>
<div class="a nw doc" style="left:333px;top:321px;letter-spacing:0.345px">not start working until some time into the filling process. The sensor starts its</div>
<div class="a nw doc" style="left:333px;top:340px;letter-spacing:0.363px">recording at the time zero minutes. The sensor initially detects the tank has 225 liters</div>
<div class="a nw doc" style="left:333px;top:359px;letter-spacing:0.200px">of water in it.</div>
<div class="a nw doc" style="left:349px;top:390px">a.</div>
<div class="a nw doc" style="left:381px;top:390px;letter-spacing:0.309px">The hose fills the aquarium at a constant rate of 15 liters per minute. What will</div>
<div class="a nw doc" style="left:381px;top:409px;letter-spacing:0.398px">the sensor read at the time 5 minutes?</div>
<div class="a nw doc" style="left:349px;top:536px">b.</div>
<div class="a nw doc" style="left:381px;top:536px;letter-spacing:0.343px">Later, someone wants to use the data to find the amount of water at times</div>
<div class="a nw doc" style="left:381px;top:555px;letter-spacing:0.391px">before the sensor starts. What should the sensor have read at the time -7</div>
<div class="a nw doc" style="left:381px;top:573px;letter-spacing:0.460px">minutes?</div>
<!-- status -->
<div class="a" style="left:0;top:746px;width:435px;height:22px;background:#07363b;border-top-right-radius:4px"></div>
<div class="a nw" style="left:6px;top:748px;font-size:13px;color:#e8f0f1;letter-spacing:0.107px">Waiting for docs.google.com...</div>

</body></html>
